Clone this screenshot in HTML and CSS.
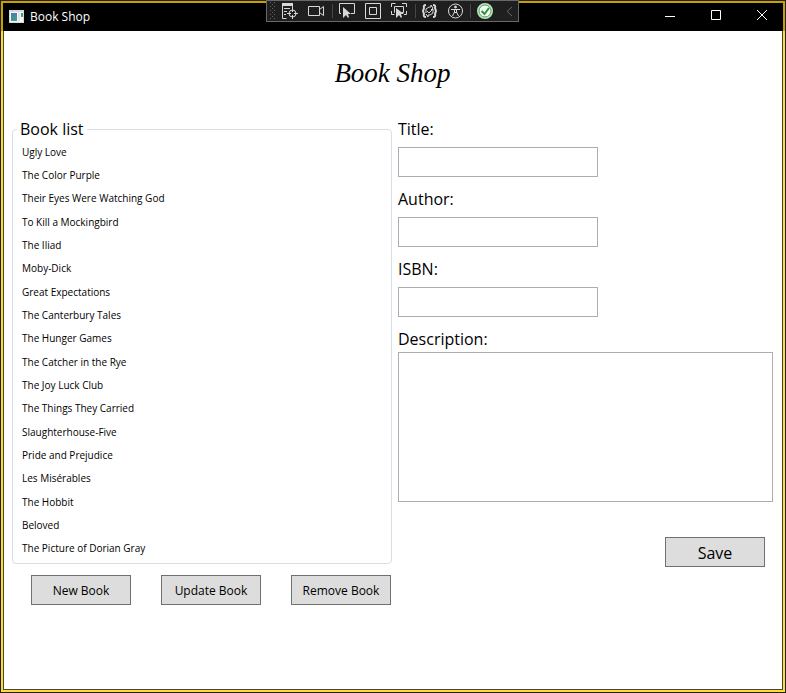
FILE: index.html
```html
<!DOCTYPE html>
<html lang="en">
<head>
<meta charset="utf-8">
<title>Book Shop</title>
<link rel="stylesheet" href="styles.css">
</head>
<body>
<div class="window">
  <header class="titlebar">
    <svg class="app-icon" width="16" height="14" viewBox="0 0 16 14" aria-hidden="true">
      <defs><linearGradient id="pane" x2="1" y2="1"><stop stop-color="#4b78b5"/><stop offset=".6" stop-color="#3f9c85"/><stop offset="1" stop-color="#62b38c"/></linearGradient></defs>
      <path fill="#d6dade" d="M0 0h15v13H0z"/><path fill="#f4f6f7" d="M1 2h13v10H1z"/>
      <path fill="url(#pane)" d="M2 3h6v8H2zM12 3h2v4h-2z"/><path fill="#dfe4e8" d="M9 3h2v8H9z"/>
    </svg>
    <span class="caption">Book Shop</span>
    <button class="caption-button" type="button" aria-label="Minimize"><svg width="12" height="12" viewBox="0 0 12 12"><path d="M1 7.500h10"/></svg></button>
    <button class="caption-button" type="button" aria-label="Maximize"><svg width="12" height="12" viewBox="0 0 12 12"><path d="M1.500 1.500h9v9h-9z"/></svg></button>
    <button class="caption-button" type="button" aria-label="Close"><svg width="12" height="12" viewBox="0 0 12 12"><path d="M1 1l10 10M11 1L1 11"/></svg></button>
  </header>

  <div class="debugbar">
    <svg width="251" height="20" viewBox="267 1 251 20" fill="none" stroke="#d8d8d8" aria-hidden="true">
      <defs><pattern id="grip" width="4" height="4" patternUnits="userSpaceOnUse"><path stroke="none" fill="#626262" d="M0 0h1v1H0zM2 2h1v1H2z"/></pattern></defs>
      <path stroke="none" fill="url(#grip)" d="M270 2h5v17h-5z"/>
      <path stroke="#464646" d="M332.500 4v14M415.500 4v14M470.500 4v14"/>
      <!-- live visual tree -->
      <path stroke="none" fill="#d8d8d8" d="M282 3h11v3h-11z"/>
      <path d="M282.500 5v13.500h4M292.500 5v3M284 8.500h6M284 11.500h3M284 14.500h2"/>
      <circle cx="292.500" cy="13.500" r="3.500"/><path d="M292.500 8v4M292.500 15v4M287 13.500h4M294 13.500h4"/>
      <!-- camera -->
      <path d="M308.500 6.500h11v9h-11zM319.500 9.500l4-3v9l-4-3"/>
      <!-- select element -->
      <path d="M341 13.500h-1.500v-10h15v10H351"/>
      <path stroke="none" fill="#d8d8d8" d="M343 7v11l3-3 2 3 1-1-1-3h3z"/>
      <!-- layout adorners -->
      <path d="M365.500 3.500h15v15h-15zM369.500 7.500h7v7h-7z"/>
      <!-- track focus -->
      <path d="M391.500 7V3.500h4M402 3.500h4.500V7M391.500 11v3.500h3M404 14.500h2.500V11M395 12.500h-.5v-6h9v6H402"/>
      <path stroke="none" fill="#d8d8d8" d="M396 8v10l3-3 2 3 1-1-1-3h3z"/>
      <!-- hot reload -->
      <path stroke-width="2" d="M426 5q-3 0-2 3l-1 3 1 3q-1 3 2 3M433 5q3 0 2 3l1 3-1 3q1 3-2 3"/>
      <path d="M426 13V9l3-2h2V5l2 3-2 2M433 9v4l-3 2h-2v2l-2-3M427 11l2 2 4-4"/>
      <!-- accessibility -->
      <circle cx="455.500" cy="11" r="7"/><circle cx="455.500" cy="7" r="1" fill="#d8d8d8"/>
      <path d="M451 9.500h9M454.500 9.500V12l-2 4M456.500 9.500V12l2 4M454 12.500h3"/>
      <!-- status -->
      <circle cx="485" cy="11" r="7" fill="#f4faf4" stroke="#bfe3c0" stroke-width="2"/><circle cx="485" cy="11" r="6" stroke="#4faa54"/>
      <path stroke="#2f9138" stroke-width="2" d="M481.500 11l3 3 4.500-6"/>
      <path stroke="#666" d="M512 7l-5 4.500 5 4.500"/>
    </svg>
  </div>

  <main class="content">
    <h1 class="heading">Book Shop</h1>
    <div class="columns">
      <section class="library">
        <fieldset class="group">
          <legend class="group-title">Book list</legend>
          <ul class="books">
            <li>Ugly Love</li>
            <li>The Color Purple</li>
            <li>Their Eyes Were Watching God</li>
            <li>To Kill a Mockingbird</li>
            <li>The Iliad</li>
            <li>Moby-Dick</li>
            <li>Great Expectations</li>
            <li>The Canterbury Tales</li>
            <li>The Hunger Games</li>
            <li>The Catcher in the Rye</li>
            <li>The Joy Luck Club</li>
            <li>The Things They Carried</li>
            <li>Slaughterhouse-Five</li>
            <li>Pride and Prejudice</li>
            <li>Les Misérables</li>
            <li>The Hobbit</li>
            <li>Beloved</li>
            <li>The Picture of Dorian Gray</li>
          </ul>
        </fieldset>
        <div class="actions">
          <button class="button" type="button">New Book</button>
          <button class="button" type="button">Update Book</button>
          <button class="button" type="button">Remove Book</button>
        </div>
      </section>
      <form class="details">
        <div class="field"><label for="title">Title:</label><input id="title" type="text"></div>
        <div class="field"><label for="author">Author:</label><input id="author" type="text"></div>
        <div class="field"><label for="isbn">ISBN:</label><input id="isbn" type="text"></div>
        <div class="field field-tall"><label for="description">Description:</label><textarea id="description"></textarea></div>
        <button class="button save" type="button">Save</button>
      </form>
    </div>
  </main>
</div>
</body>
</html>
```

FILE: styles.css
```css
* { box-sizing: border-box; }

body {
  margin: 0;
  background: #fff;
  color: #000;
  font-family: "Segoe UI", "Open Sans", sans-serif;
}

.window {
  position: relative;
  display: flex;
  flex-direction: column;
  min-height: 100vh;
  background: #ffdc32;
  border: 1px solid #222;
}

.titlebar {
  display: flex;
  align-items: center;
  height: 30px;
  padding-left: 6px;
  background: #000;
  border: 2px solid #c8a000;
  border-bottom: 0;
  color: #fff;
}

.app-icon { flex: none; }

.caption {
  flex: 1;
  padding-left: 5px;
  font-size: 12px;
  line-height: 16px;
}

.caption-button {
  display: grid;
  place-items: center;
  width: 46px;
  height: 28px;
  padding: 0 0 4px;
  background: none;
  border: 0;
}

.caption-button:last-child { margin-right: -2px; }

.caption-button svg {
  fill: none;
  stroke: #fff;
}

.debugbar {
  position: absolute;
  top: -1px;
  left: calc(50% - 127px);
  width: 253px;
  height: 22px;
  background: #1f1f1f;
  border: 1px solid #686868;
}

.debugbar svg { display: block; }

.content {
  flex: 1;
  margin: 0 2px 2px;
  padding: 0 9px 20px 8px;
  background: #fff;
  border: 1px solid #444;
  border-top: 0;
}

.heading {
  margin: 0;
  padding: 22px 0 27px;
  font-family: Gabriola, "Liberation Serif", serif;
  font-size: 27px;
  font-style: italic;
  font-weight: 400;
  line-height: 40px;
  text-align: center;
}

.columns {
  display: grid;
  grid-template-columns: 380fr 375fr;
  gap: 6px;
}

.group {
  min-width: 0;
  margin: 0;
  padding: 2px 9px 3px;
  border: 1px solid #d5dfe5;
  border-radius: 4px;
}

.group-title {
  margin-left: -5px;
  padding: 0 3px;
  font-size: 16px;
  line-height: 18px;
}

.books {
  display: grid;
  grid-auto-rows: 1fr;
  align-items: center;
  height: 420px;
  margin: 0;
  padding: 0;
  font-size: 10px;
  line-height: 14px;
  list-style: none;
}

.actions {
  display: flex;
  justify-content: flex-end;
  gap: 30px;
  padding: 11px 1px 0 0;
}

.button {
  width: 100px;
  height: 30px;
  padding: 2px 0 0;
  background: #ddd;
  border: 1px solid #707070;
  color: #000;
  font: 12px/16px "Segoe UI", "Open Sans", sans-serif;
}

.details {
  display: flex;
  flex-direction: column;
}

.field {
  display: flex;
  flex-direction: column;
  gap: 9px;
  padding-bottom: 13px;
  font-size: 16px;
  line-height: 18px;
}

.field-tall {
  gap: 4px;
  padding-bottom: 35px;
}

.field input,
.field textarea {
  width: 200px;
  height: 30px;
  margin: 0;
  padding: 4px;
  background: #fff;
  border: 1px solid #abadb3;
  border-radius: 0;
  font: inherit;
}

.field textarea {
  width: 100%;
  height: 150px;
  resize: none;
}

.save {
  align-self: flex-end;
  margin-right: 8px;
  font-size: 16px;
}
```
